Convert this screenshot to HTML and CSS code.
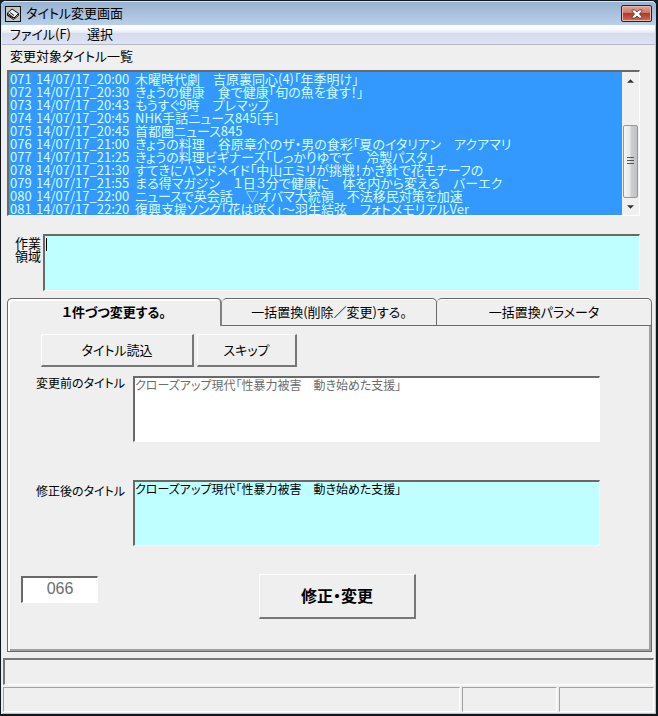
FILE: index.html
```html
<!DOCTYPE html>
<html lang="ja">
<head>
<meta charset="utf-8">
<meta name="viewport" content="width=device-width, initial-scale=1">
<title>タイトル変更画面</title>
<link rel="stylesheet" href="styles.css">
</head>
<body>
<div class="window">
  <header class="titlebar">
    <svg class="app-icon" viewBox="0 0 16 16" aria-hidden="true">
      <rect x=".5" y=".5" width="15" height="15" fill="#c4c4c4" stroke="#111"/>
      <path d="M2.5 7 7 3l6.500 4.500L9 12z" fill="#eee" stroke="#111"/>
      <path d="M2.500 7v2.500L8.500 13.500l5-4V7.500M5 6.500l4 3M2.500 9 9 12" fill="none" stroke="#111"/>
    </svg>
    <h1 class="caption">タイトル変更画面</h1>
    <button class="close" type="button" aria-label="閉じる">
      <svg viewBox="0 0 12 10" aria-hidden="true">
        <path d="M1 1h3l2 2 2-2h3v1L8.500 5 11 8v1H8L6 7 4 9H1V8l2.500-3L1 2z" fill="#fff" stroke="#5b3034" stroke-width=".8"/>
      </svg>
    </button>
  </header>
  <nav class="menubar">
    <button type="button">ファイル(F)</button>
    <button type="button">選択</button>
  </nav>

  <main class="client">
    <h2 class="list-label" id="list-label">変更対象タイトル一覧</h2>
    <div class="listbox">
      <ul class="rows" role="listbox" aria-multiselectable="true" aria-labelledby="list-label">
        <li role="option" aria-selected="true"><span>071</span><span>14/07/17_20:00</span><span>木曜時代劇　吉原裏同心(4)「年季明け」</span></li>
        <li role="option" aria-selected="true"><span>072</span><span>14/07/17_20:30</span><span>きょうの健康　食で健康「旬の魚を食す！」</span></li>
        <li role="option" aria-selected="true"><span>073</span><span>14/07/17_20:43</span><span>もうすぐ9時　プレマップ</span></li>
        <li role="option" aria-selected="true"><span>074</span><span>14/07/17_20:45</span><span>NHK手話ニュース845[手]</span></li>
        <li role="option" aria-selected="true"><span>075</span><span>14/07/17_20:45</span><span>首都圏ニュース845</span></li>
        <li role="option" aria-selected="true"><span>076</span><span>14/07/17_21:00</span><span>きょうの料理　谷原章介のザ・男の食彩「夏のイタリアン　アクアマリ</span></li>
        <li role="option" aria-selected="true"><span>077</span><span>14/07/17_21:25</span><span>きょうの料理ビギナーズ「しっかりゆでて　冷製パスタ」</span></li>
        <li role="option" aria-selected="true"><span>078</span><span>14/07/17_21:30</span><span>すてきにハンドメイド「中山エミリが挑戦！かぎ針で花モチーフの</span></li>
        <li role="option" aria-selected="true"><span>079</span><span>14/07/17_21:55</span><span>まる得マガジン　１日３分で健康に　体を内から変える　バーエク</span></li>
        <li role="option" aria-selected="true"><span>080</span><span>14/07/17_22:00</span><span>ニュースで英会話　▽オバマ大統領　不法移民対策を加速</span></li>
        <li role="option" aria-selected="true"><span>081</span><span>14/07/17_22:20</span><span>復興支援ソング「花は咲く」～羽生結弦　フォトメモリアルVer</span></li>
      </ul>
      <div class="scrollbar">
        <button type="button" class="arrow" aria-label="上へ"><svg viewBox="0 0 8 4"><path d="M4 0l4 4H0z"/></svg></button>
        <div class="track"><div class="thumb"></div></div>
        <button type="button" class="arrow" aria-label="下へ"><svg viewBox="0 0 8 4"><path d="M0 0h8L4 4z"/></svg></button>
      </div>
    </div>

    <div class="work">
      <label for="work">作業<br>領域</label>
      <textarea class="field cyan caret" id="work"></textarea>
    </div>

    <section class="tabs">
      <div class="tablist" role="tablist">
        <button type="button" class="tab active" role="tab" aria-selected="true">１件づつ変更する。</button>
        <button type="button" class="tab" role="tab" aria-selected="false">一括置換(削除／変更)する。</button>
        <button type="button" class="tab" role="tab" aria-selected="false">一括置換パラメータ</button>
      </div>
      <div class="panel" role="tabpanel">
        <div class="actions">
          <button type="button" class="btn load">タイトル読込</button>
          <button type="button" class="btn skip">スキップ</button>
        </div>
        <div class="entry before">
          <label for="before">変更前のタイトル</label>
          <textarea class="field" id="before" disabled>クローズアップ現代「性暴力被害　動き始めた支援」</textarea>
        </div>
        <div class="entry after">
          <label for="after">修正後のタイトル</label>
          <textarea class="field cyan" id="after">クローズアップ現代「性暴力被害　動き始めた支援」</textarea>
        </div>
        <div class="commit">
          <input class="field number" type="text" value="066" aria-label="番号" disabled>
          <button type="button" class="btn apply">修正・変更</button>
        </div>
      </div>
    </section>
  </main>

  <footer>
    <div class="message"></div>
    <div class="status"><div></div><div></div><div></div></div>
  </footer>
</div>
</body>
</html>
```

FILE: styles.css
```css
* {
  box-sizing: border-box;
}

body {
  margin: 0;
  background: #10222c;
  color: #000;
  font: 13px/13px "Noto Sans CJK JP", sans-serif;
  font-feature-settings: "palt";
}

button,
input,
textarea {
  margin: 0;
  color: inherit;
  font: inherit;
  font-feature-settings: inherit;
}

h1,
h2,
ul {
  margin: 0;
  padding: 0;
  font-size: inherit;
  font-weight: normal;
}

.window {
  display: flex;
  flex-direction: column;
  min-height: 100vh;
  border: solid #10181f;
  border-width: 1px 2px 2px 1px;
  border-radius: 6px 6px 0 0;
  background: #efefef;
  box-shadow: inset 1px 1px #e4eefa, inset -1px -1px #a9cbd8;
}

/* Title bar and menu */
.titlebar {
  display: flex;
  align-items: center;
  height: 24px;
  padding: 0 4px;
  border-top: 1px solid #dbe6f3;
  border-radius: 5px 5px 0 0;
  background: linear-gradient(#98b2d0, #b9d0ea);
}

.app-icon {
  width: 16px;
  height: 16px;
}

.caption {
  flex: 1;
  margin-left: 5px;
  padding-bottom: 2px;
  line-height: 18px;
}

.close {
  display: flex;
  align-items: center;
  justify-content: center;
  width: 31px;
  height: 17px;
  padding: 0;
  border: 1px solid #47131c;
  border-radius: 2px;
  background: linear-gradient(#e0a59b, #cd7464 48%, #b03a28 50%, #cf6c58);
  box-shadow: inset 0 0 0 1px #e8b8b0;
}

.close svg {
  width: 12px;
  height: 10px;
}

.menubar {
  display: flex;
  gap: 16px;
  height: 20px;
  margin: 0 1px;
  padding: 0 8px;
  border-bottom: 1px solid #b4bacb;
  background: linear-gradient(#fdfdff 0 20%, #e6eaf6 40%, #d5daed 42%, #dfe4f3);
}

.menubar button {
  padding: 0 0 2px;
  border: 0;
  background: none;
}

/* Client area */
.client {
  display: flex;
  flex: 1;
  flex-direction: column;
  padding: 0 4px 0 6px;
}

.list-label {
  padding: 4px 3px 8px;
}

.listbox {
  display: flex;
  margin-right: 12px;
  border: solid;
  border-width: 2px 1px 1px 2px;
  border-color: #696969 #fff #fff #696969;
}

.rows {
  flex: 1;
  min-width: 0;
  background: #3399ff;
  color: #d0ffff;
  list-style: none;
}

.rows li {
  display: grid;
  grid-template-columns: 26px 99px 1fr;
  padding-left: 1px;
  white-space: nowrap;
}

.scrollbar {
  display: flex;
  flex-direction: column;
  width: 17px;
  background: #f0f0f0;
}

.arrow {
  display: flex;
  align-items: center;
  justify-content: center;
  height: 17px;
  padding: 0;
  border: 0;
  background: none;
}

.arrow svg {
  width: 7px;
  height: 4px;
  fill: #333;
}

.track {
  display: flex;
  flex: 1;
  flex-direction: column;
  justify-content: flex-end;
}

.thumb {
  height: 73px;
  margin: 0 1px;
  border: 1px solid #989898;
  border-radius: 2px;
  background:
    repeating-linear-gradient(#555 0 1px, transparent 1px 3px) center / 7px 9px no-repeat,
    linear-gradient(90deg, #f5f5f5, #e6e6e8 48%, #cfd0d2 52%, #c0c1c4);
}

.field {
  display: block;
  border: solid;
  border-width: 2px 1px 1px 2px;
  border-color: #696969 #fff #fff #696969;
  border-radius: 0;
  outline: 0;
  background: #fff;
  resize: none;
}

.field:disabled {
  color: #6d6d6d;
}

.cyan {
  background: #c0ffff;
}

.caret {
  background: linear-gradient(#000, #000) 1px 2px / 1px 13px no-repeat #c0ffff;
}

.work {
  display: flex;
  margin: 18px 12px 7px 8px;
}

.work label {
  width: 28px;
  padding-top: 2px;
}

.work .field {
  flex: 1;
  height: 57px;
}

/* Tabs */
.tabs {
  display: flex;
  flex: 1;
  flex-direction: column;
}

.tablist {
  display: grid;
  grid-template-columns: repeat(3, 1fr);
  height: 28px;
}

.tab {
  padding: 0 0 2px;
  border: 1px solid #696969;
  border-left-width: 0;
  border-radius: 5px 5px 0 0;
  background: #efefef;
  box-shadow: inset 0 1px #fff;
}

.tab.active {
  border-right: 2px solid #808080;
  border-bottom: 0;
  border-left: 1px solid #696969;
  box-shadow: inset 2px 2px #fff;
  font-weight: bold;
}

.panel {
  flex: 1;
  padding: 8px 51px 0 11px;
  border: solid #696969;
  border-width: 0 1px 1px;
  box-shadow: inset 2px 0 #fff, inset -2px -2px #a0a0a0;
}

.actions {
  display: flex;
  gap: 3px;
  padding-left: 22px;
}

.btn {
  padding: 0 0 2px;
  border: solid;
  border-width: 1px 2px 2px 1px;
  border-color: #fff #777 #777 #fff;
  background: #efefef;
}

.load {
  width: 153px;
  height: 33px;
}

.skip {
  width: 100px;
  height: 33px;
}

.entry {
  display: grid;
  grid-template-columns: 97px 1fr;
  margin-left: 17px;
  font-size: 12px;
}

.entry .field {
  width: 100%;
  height: 66px;
  padding: 0;
}

.before {
  margin-top: 9px;
}

.after {
  margin-top: 38px;
}

.after label {
  padding-top: 4px;
}

.commit {
  display: flex;
  align-items: flex-start;
  gap: 161px;
  margin: 28px 0 0 2px;
}

.number {
  width: 77px;
  height: 27px;
  margin-top: 2px;
  padding-bottom: 4px;
  font: 16px/20px "Liberation Sans", sans-serif;
  text-align: center;
}

.apply {
  width: 157px;
  height: 45px;
  font-size: 16px;
  font-weight: bold;
}

/* Status area */
footer {
  padding: 6px 2px 2px 2px;
}

.message {
  height: 27px;
  margin-bottom: 2px;
  border: solid;
  border-width: 2px 1px 1px 2px;
  border-color: #777 #fff #fff #777;
}

.status {
  display: grid;
  grid-template-columns: 1fr 95px 95px;
  gap: 2px;
}

.status div {
  height: 25px;
  border: 1px solid;
  border-color: #a0a0a0 #fff #fff #a0a0a0;
}
```
